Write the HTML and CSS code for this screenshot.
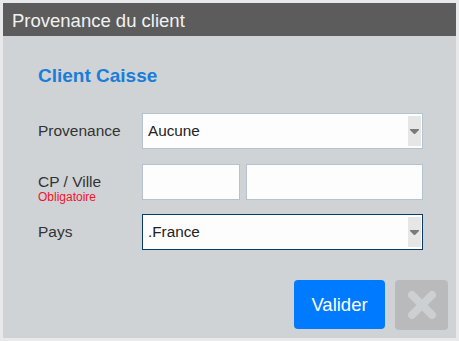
FILE: index.html
```html
<!DOCTYPE html>
<html lang="fr">
<head>
  <meta charset="UTF-8">
  <meta name="viewport" content="width=device-width, initial-scale=1.0">
  <title>Provenance du client</title>
  <link rel="stylesheet" href="styles.css">
</head>
<body>
  <div class="dialog">
    <div class="titlebar">Provenance du client</div>

    <div class="content">
      <h2 class="client-name">Client Caisse</h2>

      <div class="form-row row-provenance">
        <label class="field-label">Provenance</label>
        <div class="select">
          <span class="select-value">Aucune</span>
          <span class="select-arrow">
            <svg width="9" height="5" viewBox="0 0 9 5"><polygon points="0,0 9,0 9,1 5,5 4,5 0,1" fill="#7a7a7a"/></svg>
          </span>
        </div>
      </div>

      <div class="form-row row-ville">
        <div class="field-label">
          <div>CP / Ville</div>
          <div class="required">Obligatoire</div>
        </div>
        <div class="pair">
          <input class="input input-cp" type="text">
          <input class="input input-ville" type="text">
        </div>
      </div>

      <div class="form-row row-pays">
        <label class="field-label">Pays</label>
        <div class="select focused">
          <span class="select-value">.France</span>
          <span class="select-arrow">
            <svg width="9" height="5" viewBox="0 0 9 5"><polygon points="0,0 9,0 9,1 5,5 4,5 0,1" fill="#7a7a7a"/></svg>
          </span>
        </div>
      </div>
    </div>

    <div class="actions">
      <button class="btn-valider">Valider</button>
      <button class="btn-close" aria-label="Fermer">
        <svg width="30" height="30" viewBox="0 0 30 30">
          <path d="M5 5 L25 25 M25 5 L5 25" stroke="#cdd0d2" stroke-width="8" stroke-linecap="round"/>
        </svg>
      </button>
    </div>
  </div>
</body>
</html>
```

FILE: styles.css
```css
html, body {
  margin: 0;
  padding: 0;
}
body {
  font-family: "Liberation Sans", Arial, sans-serif;
  background-color: #fff;
  color: #333;
}
.dialog {
  width: 459px;
  height: 341px;
  box-sizing: border-box;
  border: 3px solid #e7e9eb;
  background-color: #cfd3d6;
  display: flex;
  flex-direction: column;
}
.titlebar {
  height: 33px;
  line-height: 33px;
  padding: 1px 0 0 9px;
  box-sizing: border-box;
  background-color: #5c5c5c;
  color: #f2f2f2;
  font-size: 18.5px;
}
.content {
  padding: 0 33px 0 35px;
}
.client-name {
  margin: 29px 0 26px;
  line-height: 22px;
  font-size: 19px;
  font-weight: bold;
  color: #1a7dd7;
}
.form-row {
  display: flex;
  align-items: center;
  height: 36px;
}
.row-ville {
  margin-top: 15px;
}
.row-pays {
  margin-top: 14px;
}
.field-label {
  width: 104px;
  flex: none;
  font-size: 15.5px;
  color: #333;
}
.row-ville .field-label {
  align-self: flex-start;
  padding-top: 9px;
  line-height: 18px;
}
.required {
  font-size: 12px;
  line-height: 13px;
  color: #f01428;
}
.select {
  flex: 1;
  height: 36px;
  box-sizing: border-box;
  display: flex;
  align-items: center;
  border: 1px solid #b6c3ce;
  background-color: #fdfdfd;
  padding: 1px 1px 1px 5px;
}
.select.focused {
  border-color: #0a3b62;
}
.select-value {
  flex: 1;
  font-size: 15.3px;
  color: #222;
}
.select-arrow {
  width: 13px;
  align-self: stretch;
  margin: 1px 0;
  background-color: #e6e6e6;
  display: flex;
  align-items: center;
  justify-content: center;
}
.pair {
  flex: 1;
  min-width: 0;
  display: flex;
  gap: 6px;
}
.input {
  height: 36px;
  box-sizing: border-box;
  border: 1px solid #b6c3ce;
  background-color: #fdfdfd;
  margin: 0;
  padding: 0 5px;
  font-family: inherit;
  font-size: 15px;
}
.input-cp {
  width: 98px;
  flex: none;
}
.input-ville {
  flex: 1;
  width: 0;
  min-width: 0;
}
.actions {
  margin-top: auto;
  display: flex;
  justify-content: flex-end;
  gap: 10px;
  padding: 0 8px 8px 0;
}
.btn-valider {
  width: 91px;
  height: 49px;
  border: none;
  border-radius: 4px;
  background-color: #007bff;
  color: #fff;
  font-family: inherit;
  font-size: 18.5px;
  padding: 0;
}
.btn-close {
  width: 53px;
  height: 50px;
  border: none;
  border-radius: 4px;
  background-color: #b9babc;
  padding: 0;
  display: flex;
  align-items: center;
  justify-content: center;
}
```
